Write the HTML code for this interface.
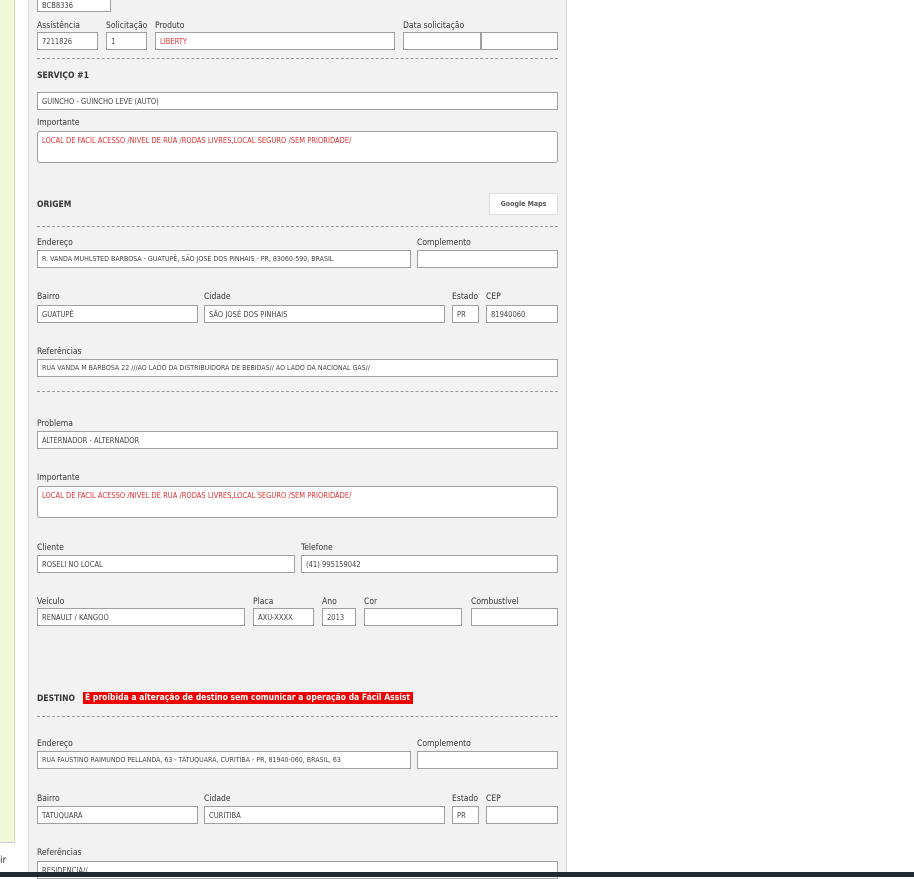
<!DOCTYPE html>
<html><head><meta charset="utf-8"><style>
body{margin:0;width:914px;height:877px;overflow:hidden;background:#fff;font-family:"DejaVu Sans Condensed","Liberation Sans",sans-serif;position:relative}
div,span{position:absolute;box-sizing:border-box}
.l{font-size:8.5px;color:#333;white-space:nowrap;margin-top:2px}
.b{font-weight:bold;font-size:8.5px;color:#333;margin-top:1px}
.i{background:#fff;border:1px solid #a0a0a0;height:18px;font-size:7.5px;color:#444;padding:4px 0 0 4px;white-space:nowrap;overflow:hidden}
.t{height:32px;border-radius:3px;color:#e03030}
.r{color:#e03030}
.d{border-top:1px dashed #999;left:37px;width:521px;height:0}
</style></head><body>
<div style="left:0;top:0;width:15px;height:843px;background:#f0f8d8;border-right:1px solid #d0d8b0;border-bottom:1px solid #ccc"></div>
<div class="l" style="left:0;top:853px;font-size:10px">ir</div>
<div style="left:28px;top:0;width:539px;height:877px;background:#f2f2f2;border-left:1px solid #ddd;border-right:1px solid #d6d6d6"></div>

<div class="i" style="left:37px;top:-6px;width:74px;padding-top:6px">BCB8336</div>
<div class="l" style="left:37px;top:19px">Assistência</div>
<div class="l" style="left:106px;top:19px">Solicitação</div>
<div class="l" style="left:155px;top:19px">Produto</div>
<div class="l" style="left:403px;top:19px">Data solicitação</div>
<div class="i" style="left:37px;top:32px;width:61px">7211826</div>
<div class="i" style="left:106px;top:32px;width:41px">1</div>
<div class="i r" style="left:155px;top:32px;width:240px">LIBERTY</div>
<div class="i" style="left:403px;top:32px;width:78px"></div>
<div class="i" style="left:481px;top:32px;width:77px"></div>
<div class="d" style="top:58px"></div>
<div class="b" style="left:37px;top:70px">SERVIÇO #1</div>
<div class="i" style="left:37px;top:92px;width:521px">GUINCHO - GUINCHO LEVE (AUTO)</div>
<div class="l" style="left:37px;top:116px">Importante</div>
<div class="i t" style="left:37px;top:131px;width:521px">LOCAL DE FACIL ACESSO /NIVEL DE RUA /RODAS LIVRES,LOCAL SEGURO /SEM PRIORIDADE/</div>
<div class="b" style="left:37px;top:199px">ORIGEM</div>
<div style="left:489px;top:193px;width:69px;height:22px;background:#fff;border:1px solid #ddd;font-size:7px;font-weight:bold;color:#555;text-align:center;line-height:20px">Google Maps</div>
<div class="d" style="top:226px"></div>
<div class="l" style="left:37px;top:236px">Endereço</div>
<div class="l" style="left:417px;top:236px">Complemento</div>
<div class="i" style="left:37px;top:250px;width:374px;font-size:7px">R. VANDA MUHLSTED BARBOSA - GUATUPÊ, SÃO JOSÉ DOS PINHAIS - PR, 83060-590, BRASIL</div>
<div class="i" style="left:417px;top:250px;width:141px"></div>
<div class="l" style="left:37px;top:290px">Bairro</div>
<div class="l" style="left:204px;top:290px">Cidade</div>
<div class="l" style="left:452px;top:290px">Estado</div>
<div class="l" style="left:486px;top:290px">CEP</div>
<div class="i" style="left:37px;top:305px;width:161px">GUATUPÊ</div>
<div class="i" style="left:204px;top:305px;width:241px">SÃO JOSÉ DOS PINHAIS</div>
<div class="i" style="left:452px;top:305px;width:27px">PR</div>
<div class="i" style="left:486px;top:305px;width:72px">81940060</div>
<div class="l" style="left:37px;top:345px">Referências</div>
<div class="i" style="left:37px;top:359px;width:521px;font-size:7px">RUA VANDA M BARBOSA 22 ///AO LADO DA DISTRIBUIDORA DE BEBIDAS// AO LADO DA NACIONAL GAS//</div>
<div class="d" style="top:391px"></div>
<div class="l" style="left:37px;top:417px">Problema</div>
<div class="i" style="left:37px;top:431px;width:521px">ALTERNADOR - ALTERNADOR</div>
<div class="l" style="left:37px;top:471px">Importante</div>
<div class="i t" style="left:37px;top:486px;width:521px">LOCAL DE FACIL ACESSO /NIVEL DE RUA /RODAS LIVRES,LOCAL SEGURO /SEM PRIORIDADE/</div>
<div class="l" style="left:37px;top:541px">Cliente</div>
<div class="l" style="left:301px;top:541px">Telefone</div>
<div class="i" style="left:37px;top:555px;width:258px">ROSELI NO LOCAL</div>
<div class="i" style="left:301px;top:555px;width:257px">(41) 995159042</div>
<div class="l" style="left:37px;top:595px">Veículo</div>
<div class="l" style="left:253px;top:595px">Placa</div>
<div class="l" style="left:322px;top:595px">Ano</div>
<div class="l" style="left:364px;top:595px">Cor</div>
<div class="l" style="left:471px;top:595px">Combustível</div>
<div class="i" style="left:37px;top:608px;width:208px">RENAULT / KANGOO</div>
<div class="i" style="left:253px;top:608px;width:61px">AXU-XXXX</div>
<div class="i" style="left:322px;top:608px;width:34px">2013</div>
<div class="i" style="left:364px;top:608px;width:98px"></div>
<div class="i" style="left:471px;top:608px;width:87px"></div>
<div class="b" style="left:37px;top:693px">DESTINO</div>
<div style="left:83px;top:692px;width:330px;height:12px;background:#e00;color:#fff;font-size:8.5px;font-weight:bold;padding-left:2px;line-height:12px;white-space:nowrap">É proibida a alteração de destino sem comunicar a operação da Fácil Assist</div>
<div class="d" style="top:716px"></div>
<div class="l" style="left:37px;top:737px">Endereço</div>
<div class="l" style="left:417px;top:737px">Complemento</div>
<div class="i" style="left:37px;top:751px;width:374px;font-size:7px">RUA FAUSTINO RAIMUNDO PELLANDA, 63 - TATUQUARA, CURITIBA - PR, 81940-060, BRASIL, 63</div>
<div class="i" style="left:417px;top:751px;width:141px"></div>
<div class="l" style="left:37px;top:792px">Bairro</div>
<div class="l" style="left:204px;top:792px">Cidade</div>
<div class="l" style="left:452px;top:792px">Estado</div>
<div class="l" style="left:486px;top:792px">CEP</div>
<div class="i" style="left:37px;top:806px;width:161px">TATUQUARA</div>
<div class="i" style="left:204px;top:806px;width:241px">CURITIBA</div>
<div class="i" style="left:452px;top:806px;width:27px">PR</div>
<div class="i" style="left:486px;top:806px;width:72px"></div>
<div class="l" style="left:37px;top:846px">Referências</div>
<div class="i" style="left:37px;top:861px;width:521px">RESIDENCIA//</div>
<div style="left:0;top:872px;width:914px;height:5px;background:#1f2b30"></div>
</body></html>
